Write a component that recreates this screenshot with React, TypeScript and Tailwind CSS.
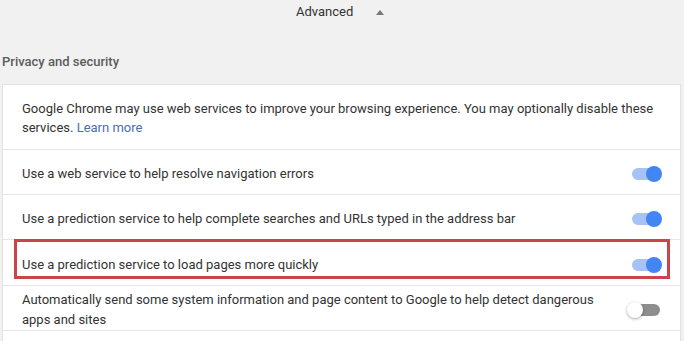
import React from "react";

const rows = [
  { id: "nav", label: "Use a web service to help resolve navigation errors", on: true },
  {
    id: "search",
    label: "Use a prediction service to help complete searches and URLs typed in the address bar",
    on: true,
  },
  { id: "preload", label: "Use a prediction service to load pages more quickly", on: true, highlight: true },
  {
    id: "safe",
    label:
      "Automatically send some system information and page content to Google to help detect dangerous apps and sites",
    on: false,
  },
];

const Toggle = ({ on }: { on: boolean }) => (
  <div className="relative w-[28px] h-[12px] mr-[20px] shrink-0">
    <div className={`w-full h-full rounded-full ${on ? "bg-[#a6c3f5]" : "bg-[#8e8e8e]"}`} />
    {on ? (
      <div className="absolute top-[-2px] right-[-2px] w-[16px] h-[16px] rounded-full bg-[#4285f4]" />
    ) : (
      <div className="absolute top-[-2px] left-[-5px] w-[16px] h-[16px] rounded-full bg-white shadow-[0_1px_3px_rgba(0,0,0,0.35)]" />
    )}
  </div>
);

const App = () => {
  return (
    <div className="w-[684px] h-[341px] overflow-hidden bg-[#f1f1f1] font-['Roboto',sans-serif] text-[13px] text-[#333]">
      {/* Advanced */}
      <div className="h-[24px] flex items-center pl-[296px]">
        <span className="leading-[20px]">Advanced</span>
        <svg width="8" height="5" viewBox="0 0 8 5" className="ml-[23px]">
          <path d="M0 5 L4 0 L8 5 Z" fill="#777" />
        </svg>
      </div>

      <div className="mt-[28px] mb-[12px] pl-[2px] leading-[20px] font-medium text-[#5c5c5c]">
        Privacy and security
      </div>

      <div className="ml-[2px] w-[679px] bg-white border border-[#e2e2e2] border-b-0">
        <div className="h-[65px] border-b border-[#e6e6e6] pl-[19px] pr-[20px] pt-[2px] flex items-center leading-[19px]">
          <p>
            Google Chrome may use web services to improve your browsing experience. You may optionally disable these
            services. <a className="text-[#4c6fa9]">Learn more</a>
          </p>
        </div>

        {rows.map((row) => (
          <div
            key={row.id}
            className={`relative ${row.highlight ? "h-[46px]" : "h-[45px]"} border-b border-[#e6e6e6] pl-[19px] pt-[4px] flex items-center justify-between`}
          >
            <p className="leading-[20px] max-w-[580px]">{row.label}</p>
            <Toggle on={row.on} />
            {row.highlight && (
              <div className="absolute left-[11px] top-[-1px] w-[656px] h-[40px] border-[3px] border-[#c9444b]" />
            )}
          </div>
        ))}
        <div className="h-[10px]" />
      </div>
    </div>
  );
};

export default App;
